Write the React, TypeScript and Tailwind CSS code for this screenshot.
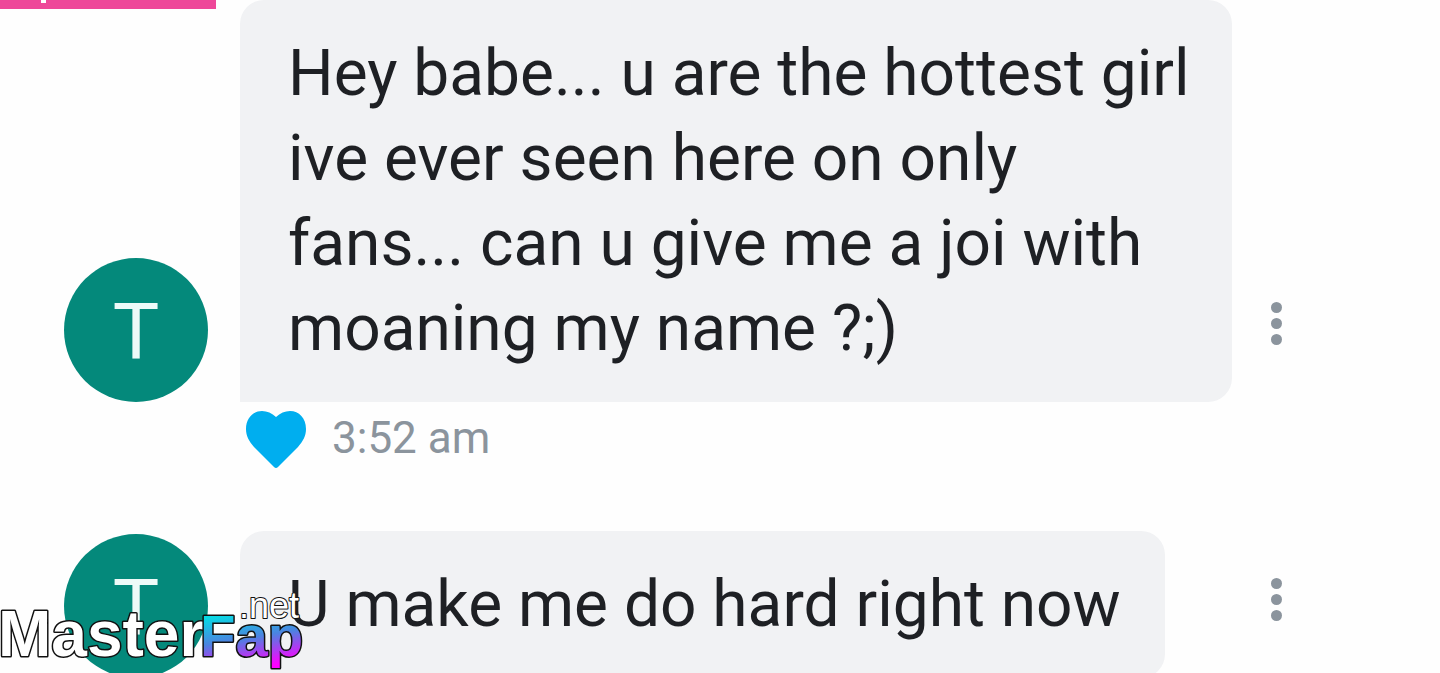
type MessageProps = {
  text: string;
};

const firstMessage = `Hey babe... u are the hottest girl
ive ever seen here on only
fans... can u give me a joi with
moaning my name ?;)`;

const Avatar = () => {
  return (
    <div className="flex h-36 w-36 shrink-0 items-center justify-center rounded-full bg-[#04897b] pt-1">
      <span className="text-[78px] leading-none text-[#eefaf8]">T</span>
    </div>
  );
};

const MenuButton = () => {
  return (
    <button
      type="button"
      aria-label="Message options"
      className="mb-[57px] flex w-[88px] shrink-0 flex-col items-center gap-[5px]"
    >
      <span className="h-[11px] w-[11px] rounded-full bg-[#8b949d]" />
      <span className="h-[11px] w-[11px] rounded-full bg-[#8b949d]" />
      <span className="h-[11px] w-[11px] rounded-full bg-[#8b949d]" />
    </button>
  );
};

const Message = ({ text }: MessageProps) => {
  return (
    <div className="flex items-end pl-16 pr-[120px]">
      <Avatar />
      <div className="ml-8 min-w-0 flex-1">
        <p className="w-fit max-w-full whitespace-pre rounded-3xl rounded-bl-none bg-[#f1f2f4] py-[31px] pl-12 pr-11 text-[64px] leading-[85px] text-[#1e2024]">
          {text}
        </p>
      </div>
      <MenuButton />
    </div>
  );
};

const MessageMeta = () => {
  return (
    <div className="flex items-start gap-[26px] pb-[62px] pl-[246px] pt-[9px]">
      <button type="button" aria-label="Unlike message">
        <svg className="block" width="60" height="58" viewBox="0 0 60 58" fill="#00aeef">
          <path d="M30 6C26 2 21 0 16 0C7 0 0 7 0 18C0 25 3 30 8 36L28 56Q30 58 32 56L52 36C57 30 60 25 60 18C60 7 53 0 44 0C39 0 34 2 30 6Z" />
        </svg>
      </button>
      <time className="text-[44px] leading-[54px] text-[#8b949d]">3:52 am</time>
    </div>
  );
};

const Watermark = () => {
  return (
    <svg
      className="absolute bottom-0 left-0"
      width="310"
      height="80"
      viewBox="0 0 310 80"
      fontFamily="Liberation Sans, Arial, sans-serif"
      strokeLinejoin="round"
    >
      <defs>
        <linearGradient id="fap" gradientUnits="userSpaceOnUse" x1="225" y1="18" x2="235" y2="78">
          <stop offset="0" stopColor="#00e5e5" />
          <stop offset="0.5" stopColor="#4b83e0" />
          <stop offset="1" stopColor="#ff00ff" />
        </linearGradient>
      </defs>
      {/* the outline is painted under the fill, so the letters stay heavy */}
      <g stroke="#111111" strokeWidth="3" paintOrder="stroke">
        <text x="-2" y="63" fontSize="64" fontWeight="700" fill="#ffffff">
          Master
        </text>
        <text x="200" y="63" fontSize="58" fontWeight="700" fill="url(#fap)">
          Fap
        </text>
        <text x="239" y="25" fontSize="36" fill="#ffffff" strokeWidth="2">
          .net
        </text>
      </g>
    </svg>
  );
};

const App = () => {
  return (
    <main className="relative h-screen overflow-hidden bg-[#fefefe] font-['Roboto',sans-serif]">
      <div className="absolute left-0 top-0 h-[9px] w-[216px] bg-[#ee4799]">
        <div className="ml-[41px] h-[3px] w-[5px] bg-white" />
      </div>
      <Message text={firstMessage} />
      <MessageMeta />
      <Message text="U make me do hard right now" />
      <Watermark />
    </main>
  );
};

export default App;
